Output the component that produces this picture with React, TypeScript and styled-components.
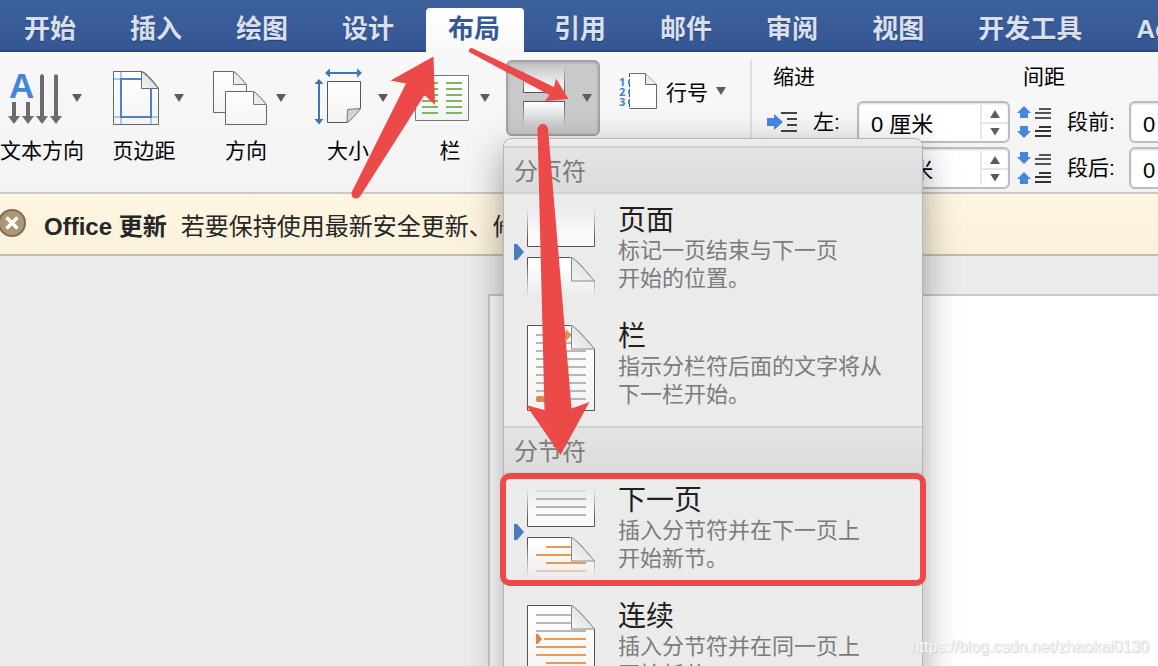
import React from "react";
import styled, { createGlobalStyle, css } from "styled-components";

const Global = createGlobalStyle`
  * { box-sizing: border-box; }
  body {
    margin: 0;
    font-family: "Liberation Sans", "Noto Sans CJK SC", sans-serif;
    color: #000;
  }
  button, input { font: inherit; color: inherit; }
  button { border: 0; padding: 0; background: none; cursor: default; }
`;

const RED = "#ec4a49";

const Window = styled.div`
  position: relative;
  display: flex;
  flex-direction: column;
  height: 100vh;
  overflow: hidden;
  background: #ebebeb;
`;

const TabBar = styled.nav`
  display: flex;
  flex: none;
  align-items: flex-end;
  gap: 8px;
  height: 52px;
  padding-left: 2px;
  background: linear-gradient(#3d619d, #345793);
  box-shadow: inset 0 -2px #2c4a80;
`;

const Tab = styled.button<{ $active?: boolean }>`
  flex: none;
  height: 44px;
  padding: 0 24px 2px 22px;
  border-radius: 4px 4px 0 0;
  font-size: 26px;
  font-weight: bold;
  line-height: 42px;
  white-space: nowrap;
  color: #d9dfec;
  text-shadow: 0 1px 1px rgba(0, 0, 0, 0.3);
  ${(p) =>
    p.$active &&
    css`
      color: #355896;
      background: linear-gradient(#fff, #f8f8f8);
      text-shadow: none;
    `}
`;

const Ribbon = styled.div`
  position: relative;
  z-index: 2;
  display: flex;
  flex: none;
  height: 142px;
  border-bottom: 2px solid #c8c8c8;
  background: linear-gradient(#f8f8f8, #f3f3f3);
  font-size: 21px;
`;

const ToolGroup = styled.div`
  display: flex;
  flex: none;
  gap: 16px;
  padding-top: 8px;
`;

const Tool = styled.button`
  display: flex;
  flex-direction: column;
  align-items: center;
  width: 86px;
  line-height: 30px;
  white-space: nowrap;
`;

const ToolFace = styled.span`
  display: flex;
  align-items: center;
  gap: 6px;
  width: 86px;
  height: 76px;
`;

const ToolLabel = styled.span`
  padding-right: 2px;
`;

const Caret = styled.span`
  flex: none;
  width: 10px;
  height: 8px;
  background: #5c5c5c;
  clip-path: polygon(0 0, 100% 0, 50% 100%);
`;

const BreaksAnchor = styled.div`
  position: relative;
  flex: none;
  height: 76px;
  margin: 8px 0 0 12px;
`;

const BreaksButton = styled.button`
  display: flex;
  align-items: center;
  gap: 6px;
  width: 94px;
  height: 76px;
  padding-left: 2px;
  border: 2px solid #a3a3a3;
  border-radius: 6px;
  background: #c9c9c9;
  box-shadow: inset 0 1px 3px rgba(0, 0, 0, 0.15);
`;

const LineNumbers = styled.button`
  display: flex;
  flex: none;
  align-items: center;
  gap: 8px;
  height: 48px;
  margin: 15px 0 0 18px;
  white-space: nowrap;
`;

const Divider = styled.div`
  flex: none;
  width: 2px;
  height: 126px;
  margin: 8px 0 0 24px;
  background: #e0e0e0;
`;

const Measures = styled.fieldset<{ $inset: number }>`
  flex: none;
  min-width: 0;
  margin: 0;
  padding: 0 0 0 ${(p) => p.$inset}px;
  border: 0;
`;

const MeasuresTitle = styled.legend`
  padding: 0 6px;
  line-height: 49px;
`;

const MeasureRow = styled.div`
  display: flex;
  align-items: center;
  height: 42px;
  margin-bottom: 4px;
`;

const MeasureLabel = styled.label<{ $wide?: boolean }>`
  width: ${(p) => (p.$wide ? 62 : 44)}px;
  margin-left: 15px;
  line-height: 42px;
  white-space: nowrap;
`;

const Field = styled.div`
  display: flex;
  width: 153px;
  height: 42px;
  border: 2px solid #bdbdbd;
  border-radius: 6px;
  background: #fff;
  box-shadow: inset 0 1px 2px rgba(0, 0, 0, 0.15);
`;

const FieldInput = styled.input`
  flex: 1;
  min-width: 0;
  padding: 0 0 0 12px;
  border: 0;
  outline: 0;
  background: transparent;
  font-size: 22px;
`;

const Stepper = styled.div`
  display: grid;
  grid-template-rows: 1fr 1fr;
  width: 28px;
  margin: 2px 0;
  border-left: 2px solid #e6e6e6;
`;

const Step = styled.button<{ $up?: boolean }>`
  display: flex;
  align-items: center;
  justify-content: center;
  & + & { border-top: 2px solid #e6e6e6; }
  ${Caret} { transform: ${(p) => (p.$up ? "scaleY(-1)" : "none")}; }
`;

const Notice = styled.div`
  display: flex;
  flex: none;
  align-items: center;
  height: 62px;
  border-bottom: 2px solid #c6bca5;
  background: linear-gradient(#fef6e0, #f9f1dc);
  font-size: 24px;
  color: #262626;
  white-space: nowrap;
`;

const Dismiss = styled.button`
  display: flex;
  width: 26px;
  height: 28px;
  margin-bottom: 2px;
  justify-content: flex-end;
`;

const NoticeTitle = styled.strong`
  margin: 0 14px 0 18px;
`;

const Workspace = styled.main`
  flex: 1;
  display: flex;
  padding: 38px 0 0 488px;
`;

const Paper = styled.div`
  flex: 1;
  border: solid #c9c9c9;
  border-width: 2px 0 0 2px;
  background: #fff;
`;

const Menu = styled.div`
  position: absolute;
  top: calc(100% + 2px);
  left: -3px;
  width: 420px;
  padding-top: 7px;
  border: 1px solid #b5b5b5;
  border-radius: 8px 8px 0 0;
  background: #ebebeb;
  box-shadow: 0 12px 36px rgba(0, 0, 0, 0.36);
`;

const MenuHeading = styled.div`
  height: 48px;
  padding-left: 10px;
  border: solid #d2d2d2;
  border-width: 2px 0;
  background: linear-gradient(#e4e4e4, #dbdbdb);
  font-size: 24px;
  line-height: 48px;
  color: #7c7c7c;
`;

const MenuItem = styled.button<{ $marked?: boolean }>`
  position: relative;
  display: flex;
  gap: 23px;
  width: 100%;
  height: 116px;
  padding-left: 9px;
  text-align: left;
  ${(p) =>
    p.$marked &&
    css`
      &::after {
        content: "";
        position: absolute;
        inset: -1px -4px 4px -4px;
        border: 6px solid ${RED};
        border-radius: 10px;
      }
    `}
`;

const ItemText = styled.span`
  display: flex;
  flex-direction: column;
  padding-top: 9px;
  white-space: pre-line;
`;

const ItemTitle = styled.span`
  height: 34px;
  font-size: 28px;
  line-height: 36px;
  color: #1f1f1f;
`;

const ItemNote = styled.span`
  font-size: 22px;
  line-height: 28px;
  color: #7b7b7b;
`;

const Markup = styled.svg`
  position: absolute;
  top: 0;
  left: 0;
  z-index: 3;
  pointer-events: none;
`;

const Watermark = styled.div`
  position: absolute;
  right: 9px;
  bottom: 9px;
  z-index: 4;
  font-size: 16px;
  line-height: 20px;
  color: rgba(255, 255, 255, 0.85);
  text-shadow: 1px 1px 1px #d0d0d0, 0 0 1px #d4d4d4;
`;

const ToolSvg = ({ children }: { children: React.ReactNode }) => (
  <svg width="66" height="76" viewBox="0 0 66 76" fill="none" aria-hidden="true">
    <defs>
      <linearGradient id="sheet" x1="0" y1="0" x2="0" y2="1">
        <stop offset="0" stopColor="#fff" />
        <stop offset="1" stopColor="#f3f3f3" />
      </linearGradient>
      <linearGradient id="curl" x1="0" y1="1" x2="1" y2="0">
        <stop offset="0" stopColor="#f6f6f6" />
        <stop offset="1" stopColor="#d4d4d4" />
      </linearGradient>
    </defs>
    {children}
  </svg>
);

const Letter = styled.text`
  font-size: 35px;
  font-weight: bold;
  fill: #4585d8;
`;

const TextDirectionIcon = () => (
  <ToolSvg>
    <Letter x="9" y="38">A</Letter>
    {[14, 28].map((x) => (
      <path key={x} d={`M${x - 2} 42h4v14h4l-6 8-6-8h4Z`} fill="#6c6c6c" />
    ))}
    {[42, 56].map((x) => (
      <path key={x} d={`M${x - 2} 16q2-4 4 0v40h4l-6 8-6-8h4Z`} fill="#6c6c6c" />
    ))}
  </ToolSvg>
);

const MarginsIcon = () => (
  <ToolSvg>
    <path d="M11.500 11.500h28q6 1 17 17v36h-45Z" fill="url(#sheet)" />
    <path d="M19 12v52M12 19h28M12 57h44M49 57v7" stroke="#a9c6ea" strokeWidth="2" />
    <path d="M39 19H19v38h30V28" stroke="#4d83c6" strokeWidth="2" />
    <path d="M39.500 11.500q3 1 17 17h-17Z" fill="url(#curl)" stroke="#6b6b6b" />
    <path d="M11.500 11.500h28q6 1 17 17v36h-45Z" stroke="#666" />
  </ToolSvg>
);

const OrientationIcon = () => (
  <ToolSvg>
    <path d="M9.500 11.500h19q5 1 14 14v27h-33Z" fill="url(#sheet)" stroke="#666" />
    <path d="M29.500 11.500q3 1 13 13h-13Z" fill="url(#curl)" stroke="#777" />
    <path d="M21.500 31.500h27q5 1 14 14v19h-41Z" fill="url(#sheet)" stroke="#666" />
    <path d="M49.500 31.500q3 1 13 13h-13Z" fill="url(#curl)" stroke="#777" />
  </ToolSvg>
);

const SizeIcon = () => (
  <ToolSvg>
    <path
      d="M19 13 24 8.500V12h27V8.500L56 13l-5 4.500V14H24v3.500ZM13 19l4.500 5H14v35h3.500L13 64.500 8.500 59H12V24H8.500Z"
      fill="#3f74b7"
    />
    <path d="M21.500 21.500h33v27L41 62.500H21.500Z" fill="url(#sheet)" stroke="#555" />
    <path d="M54.500 48.500Q46 60 41 62.500l.500-13Z" fill="#d4d4d4" stroke="#777" />
  </ToolSvg>
);

const ColumnsIcon = () => (
  <ToolSvg>
    <path d="M7.500 15.500h53v45h-53Z" fill="url(#sheet)" stroke="#777" />
    {[23, 29, 35, 41, 47, 53].map((y) => (
      <path key={y} d={`M14 ${y}h16M38 ${y}h16`} stroke="#82b563" strokeWidth="2" />
    ))}
  </ToolSvg>
);

const BreaksIcon = () => (
  <svg width="66" height="72" viewBox="0 2 66 72" fill="none" aria-hidden="true">
    <defs>
      <linearGradient id="fadeUp" x1="0" y1="0" x2="0" y2="1">
        <stop offset="0" stopColor="#fff" stopOpacity="0" />
        <stop offset="1" stopColor="#fff" />
      </linearGradient>
      <linearGradient id="fadeDown" x1="0" y1="0" x2="0" y2="1">
        <stop offset="0" stopColor="#fff" />
        <stop offset="1" stopColor="#fff" stopOpacity="0" />
      </linearGradient>
      <linearGradient id="edgeUp" x1="0" y1="6" x2="0" y2="32" gradientUnits="userSpaceOnUse">
        <stop offset="0" stopColor="#555" stopOpacity="0" />
        <stop offset="1" stopColor="#555" />
      </linearGradient>
      <linearGradient id="edgeDown" x1="0" y1="41" x2="0" y2="68" gradientUnits="userSpaceOnUse">
        <stop offset="0" stopColor="#555" />
        <stop offset="1" stopColor="#555" stopOpacity="0" />
      </linearGradient>
    </defs>
    <path d="M13 6h41v26H13Z" fill="url(#fadeUp)" />
    <path d="M13.500 6v26.500h41V6" stroke="url(#edgeUp)" />
    <path d="M13 41h41v26H13Z" fill="url(#fadeDown)" />
    <path d="M13.500 68V41.500h41V68" stroke="url(#edgeDown)" />
  </svg>
);

const Digit = styled.text`
  font-family: "Open Sans", sans-serif;
  font-size: 11px;
  font-weight: bold;
  fill: #3f80d6;
`;

const LineNumbersIcon = () => (
  <svg width="40" height="42" viewBox="0 0 40 42" fill="none" aria-hidden="true">
    <path d="M11.500 3.500h16l11 11v24h-27Z" fill="#fff" />
    <path d="M11.500 3.500h16l11 11v24h-27" stroke="#666" />
    <path d="M27.500 3.500v11h11" fill="#eee" stroke="#666" />
    <path d="M11.500 4v34" stroke="#444" strokeDasharray="3 2" />
    <path d="M10 12h2M10 22h2M10 32h2" stroke="#4a8be0" strokeWidth="4" />
    <Digit x="1" y="16">1</Digit>
    <Digit x="1" y="26">2</Digit>
    <Digit x="1" y="36">3</Digit>
  </svg>
);

const IndentIcon = ({ flip }: { flip?: boolean }) => (
  <svg width="31" height="24" viewBox="0 0 31 24" fill="none" aria-hidden="true">
    <path
      d={flip ? "M16 8H9V4L0 12l9 8v-4h7Z" : "M0 8h7V4l9 8-9 8v-4H0Z"}
      fill="#4686db"
    />
    <path d="M14 3h16M20 9h10M20 15h10M14 21h16" stroke="#444" strokeWidth="2" />
  </svg>
);

const UP = "M0 8 7 1l7 7h-3v5H3V8Z";
const DOWN = "M0 6h3V1h8v5h3l-7 7Z";

const SpacingIcon = ({ after }: { after?: boolean }) => (
  <svg width="35" height="34" viewBox="0 0 35 34" fill="none" aria-hidden="true">
    <path d={after ? DOWN : UP} fill="#4686db" />
    <path d={after ? UP : DOWN} transform="translate(0 20)" fill="#4686db" />
    <path d="M22 4h12M18 8h16M18 13h16" stroke="#555" strokeWidth="2" />
    <path d="M22 22h12M18 26h16M18 31h16" stroke="#333" strokeWidth="2" />
  </svg>
);

const Marker = () => <path d="M1 50h3l7 8-7 8H1Z" fill="#477dc0" />;

const SplitPagesIcon = ({ lines }: { lines?: boolean }) => (
  <svg width="82" height="116" viewBox="0 0 82 116" fill="none" aria-hidden="true">
    <defs>
      <linearGradient id="pageUp" x1="0" y1="14" x2="0" y2="40" gradientUnits="userSpaceOnUse">
        <stop offset="0" stopColor="#ebebeb" />
        <stop offset="1" stopColor="#fafafa" />
      </linearGradient>
      <linearGradient id="pageDown" x1="0" y1="70" x2="0" y2="103" gradientUnits="userSpaceOnUse">
        <stop offset="0" stopColor="#fff" />
        <stop offset="1" stopColor="#ebebeb" />
      </linearGradient>
      <linearGradient id="lineUp" x1="0" y1="14" x2="0" y2="45" gradientUnits="userSpaceOnUse">
        <stop offset="0" stopColor="#555" stopOpacity="0" />
        <stop offset="1" stopColor="#555" />
      </linearGradient>
      <linearGradient id="lineDown" x1="0" y1="70" x2="0" y2="103" gradientUnits="userSpaceOnUse">
        <stop offset="0" stopColor="#555" />
        <stop offset="1" stopColor="#555" stopOpacity="0" />
      </linearGradient>
    </defs>
    <Marker />
    <path d="M14 14h68v38H14Z" fill="url(#pageUp)" />
    <path d="M14.500 14v38.500h67V14" stroke="url(#lineUp)" />
    <path d="M14 63h44l24 24v16H14Z" fill="url(#pageDown)" />
    {lines && (
      <>
        <path d="M23 17h50" stroke="#dcdcdc" strokeWidth="2" />
        <path d="M23 25h50M23 33h50M23 41h50" stroke="#b6b6b6" strokeWidth="2" />
        <path d="M33 73h26M23 81h36M33 89h40" stroke="#e69a55" strokeWidth="2" />
        <path d="M23 97h50" stroke="#eac9ac" strokeWidth="2" />
      </>
    )}
    <path d="M14.500 103V63.500h43q7 2 24 24V103" stroke="url(#lineDown)" />
    <path d="M58.500 63.500q4 1 23 23.500h-23Z" fill="url(#curl)" stroke="#888" />
  </svg>
);

const FullPageIcon = ({ section }: { section?: boolean }) => (
  <svg width="82" height="116" viewBox="0 0 82 116" fill="none" aria-hidden="true">
    <path d="M14.500 15.500h43q7 2 24 24v61h-67Z" fill="url(#sheet)" stroke="#555" />
    {section ? (
      <>
        <path d="M23 25h36M23 33h36M23 41h50" stroke="#b6b6b6" strokeWidth="2" />
        <path d="M31 49h42M23 57h50M23 65h50M33 73h40" stroke="#e69a55" strokeWidth="2" />
        <path d="M23 44h2l4 5-4 5h-2Z" fill="#d9864a" />
      </>
    ) : (
      <>
        <path
          d="M23 25h36M23 33h36M23 41h50M23 49h50M23 57h50M23 65h50M23 73h50M23 81h50M33 89h40"
          stroke="#b6b6b6"
          strokeWidth="2"
        />
        <rect x="23" y="86" width="12" height="6" rx="2" fill="#db8a4a" />
        <path d="M50 22h3v-3l6 6-6 6v-3h-3Z" fill="#e09450" />
      </>
    )}
    <path d="M58.500 15.500q4 1 23 23.500h-23Z" fill="url(#curl)" stroke="#888" />
  </svg>
);

const tabs = ["开始", "插入", "绘图", "设计", "布局", "引用", "邮件", "审阅", "视图", "开发工具", "Acrobat"];

const tools = [
  { label: "文本方向", icon: <TextDirectionIcon /> },
  { label: "页边距", icon: <MarginsIcon /> },
  { label: "方向", icon: <OrientationIcon /> },
  { label: "大小", icon: <SizeIcon /> },
  { label: "栏", icon: <ColumnsIcon /> },
];

const sections = [
  {
    heading: "分页符",
    items: [
      { title: "页面", note: "标记一页结束与下一页\n开始的位置。", icon: <SplitPagesIcon /> },
      { title: "栏", note: "指示分栏符后面的文字将从\n下一栏开始。", icon: <FullPageIcon /> },
    ],
  },
  {
    heading: "分节符",
    items: [
      { title: "下一页", note: "插入分节符并在下一页上\n开始新节。", icon: <SplitPagesIcon lines />, marked: true },
      { title: "连续", note: "插入分节符并在同一页上\n开始新节。", icon: <FullPageIcon section /> },
    ],
  },
];

type MeasureProps = { id: string; label: string; value: string; wide?: boolean; icon: React.ReactNode };

const Measure = ({ id, label, value, wide, icon }: MeasureProps) => (
  <MeasureRow>
    {icon}
    <MeasureLabel htmlFor={id} $wide={wide}>{label}</MeasureLabel>
    <Field>
      <FieldInput id={id} defaultValue={value} />
      <Stepper>
        <Step $up aria-label={`${label} +`}><Caret /></Step>
        <Step aria-label={`${label} -`}><Caret /></Step>
      </Stepper>
    </Field>
  </MeasureRow>
);

export default function App() {
  return (
    <Window>
      <Global />
      <TabBar>
        {tabs.map((t) => (
          <Tab key={t} $active={t === "布局"}>{t}</Tab>
        ))}
      </TabBar>

      <Ribbon>
        <ToolGroup>
          {tools.map((t) => (
            <Tool key={t.label}>
              <ToolFace>{t.icon}<Caret /></ToolFace>
              <ToolLabel>{t.label}</ToolLabel>
            </Tool>
          ))}
        </ToolGroup>

        <BreaksAnchor>
          <BreaksButton aria-label="分隔符"><BreaksIcon /><Caret /></BreaksButton>
          <Menu>
            {sections.map((s) => (
              <React.Fragment key={s.heading}>
                <MenuHeading>{s.heading}</MenuHeading>
                {s.items.map((it) => (
                  <MenuItem key={it.title} $marked={"marked" in it}>
                    {it.icon}
                    <ItemText>
                      <ItemTitle>{it.title}</ItemTitle>
                      <ItemNote>{it.note}</ItemNote>
                    </ItemText>
                  </MenuItem>
                ))}
              </React.Fragment>
            ))}
          </Menu>
        </BreaksAnchor>

        <LineNumbers><LineNumbersIcon />行号<Caret /></LineNumbers>
        <Divider />

        <Measures $inset={15}>
          <MeasuresTitle>缩进</MeasuresTitle>
          <Measure id="left" label="左:" value="0 厘米" icon={<IndentIcon />} />
          <Measure id="right" label="右:" value="0 厘米" icon={<IndentIcon flip />} />
        </Measures>
        <Measures $inset={7}>
          <MeasuresTitle>间距</MeasuresTitle>
          <Measure id="before" label="段前:" value="0 磅" wide icon={<SpacingIcon />} />
          <Measure id="after" label="段后:" value="0 磅" wide icon={<SpacingIcon after />} />
        </Measures>
      </Ribbon>

      <Notice>
        <Dismiss aria-label="关闭">
          <svg width="28" height="28" viewBox="0 0 28 28" style={{ flex: "none" }} aria-hidden="true">
            <circle cx="14" cy="14" r="13" fill="#ac9776" stroke="#836e50" strokeWidth="2" />
            <path d="m8.500 8.500 11 11m0-11-11 11" stroke="#fff" strokeWidth="3.500" />
          </svg>
        </Dismiss>
        <NoticeTitle>Office 更新</NoticeTitle>
        <span>若要保持使用最新安全更新、修复和改进</span>
      </Notice>

      <Workspace>
        <Paper />
      </Workspace>

      <Markup width="640" height="480" viewBox="0 0 640 480" fill={RED} aria-hidden="true">
        <path d="M433.500 56.500 390.500 80.500 406 83.500 351.500 192.500Q351 199 357 198.500 360 198 361 195L424.500 95 435 105Z" />
        <path d="M568.500 99 556 78.500 554 87 472 48Q468 48 469 52L549.500 95 545 101Z" />
        <path d="M560.500 455 526 405 544.500 410 537.500 129Q539 124 543 124 547 124 548 129L571.500 408.500 589.500 402Z" />
      </Markup>
      <Watermark>https://blog.csdn.net/zhaokai0130</Watermark>
    </Window>
  );
}
